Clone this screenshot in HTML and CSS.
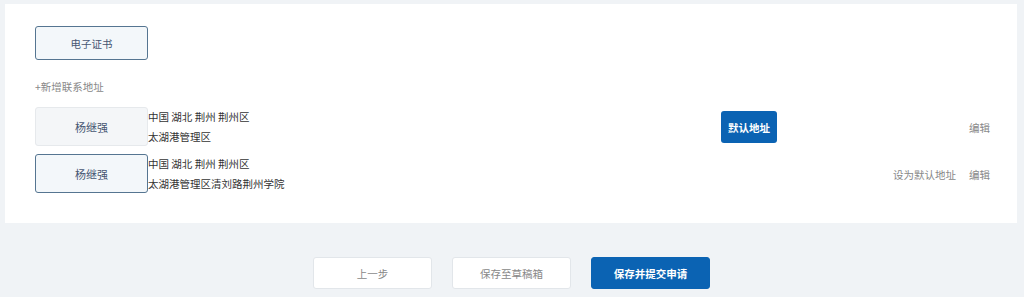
FILE: index.html
```html
<!DOCTYPE html>
<html lang="zh-CN">
<head>
<meta charset="utf-8">
<title>联系地址</title>
<link rel="stylesheet" href="styles.css">
</head>
<body>
<div class="card">
  <button class="box box-active cert">电子证书</button>
  <div class="add-link">+新增联系地址</div>
  <div class="rows">
    <div class="row">
      <div class="box name">杨继强</div>
      <div class="addr">
        <div>中国 湖北 荆州 荆州区</div>
        <div>太湖港管理区</div>
      </div>
      <div class="default-col"><span class="default-btn">默认地址</span></div>
      <div class="actions"><span class="act">编辑</span></div>
    </div>
    <div class="row">
      <div class="box box-active name">杨继强</div>
      <div class="addr">
        <div>中国 湖北 荆州 荆州区</div>
        <div>太湖港管理区清刘路荆州学院</div>
      </div>
      <div class="default-col"></div>
      <div class="actions"><span class="act">设为默认地址</span><span class="act">编辑</span></div>
    </div>
  </div>
</div>
<div class="footer">
  <button class="fbtn">上一步</button>
  <button class="fbtn">保存至草稿箱</button>
  <button class="fbtn primary">保存并提交申请</button>
</div>
</body>
</html>
```

FILE: styles.css
```css
html, body {
  margin: 0;
  padding: 0;
  background: #f0f3f6;
  font-family: "Noto Sans CJK SC", "Noto Sans", sans-serif;
  font-size: 10.5px;
  color: #333;
}

.card {
  margin: 4px 7px 0 5px;
  height: 219px;
  box-sizing: border-box;
  background: #fff;
  padding: 22px 27px 0 30px;
}

.box {
  box-sizing: border-box;
  width: 113px;
  border: 1px solid #e6e9ec;
  background: #f4f6f8;
  border-radius: 3px;
  display: flex;
  align-items: center;
  justify-content: center;
  color: #475672;
  font-family: inherit;
  font-size: 10.5px;
  padding: 0;
}

.box-active {
  border-color: #557591;
  background: #f3f7fa;
}

.cert {
  height: 34px;
}

.add-link {
  margin-top: 20px;
  height: 13px;
  line-height: 13px;
  color: #888;
}

.rows {
  margin-top: 14px;
  display: flex;
  flex-direction: column;
  gap: 7px;
}

.row {
  display: flex;
  align-items: center;
  height: 40px;
}

.name {
  height: 39px;
  align-self: flex-start;
  font-size: 11px;
}

.addr {
  width: 573px;
  line-height: 20px;
  color: #333;
  align-self: flex-start;
}

.default-col {
  width: 56px;
}

.default-btn {
  display: flex;
  align-items: center;
  justify-content: center;
  width: 56px;
  height: 32px;
  background: #0b63b3;
  color: #fff;
  font-weight: bold;
  border-radius: 3px;
}

.actions {
  flex: 1;
  display: flex;
  justify-content: flex-end;
  gap: 13px;
  color: #888;
}

.footer {
  margin-top: 34px;
  display: flex;
  justify-content: center;
  gap: 20px;
  padding-right: 1px;
}

.fbtn {
  box-sizing: border-box;
  width: 119px;
  height: 32px;
  border: 1px solid #e2e6ea;
  background: #fff;
  color: #888;
  border-radius: 3px;
  font-family: inherit;
  font-size: 10.5px;
  padding: 0;
}

.fbtn.primary {
  background: #0b63b3;
  border-color: #0b63b3;
  color: #fff;
  font-weight: bold;
}
```
